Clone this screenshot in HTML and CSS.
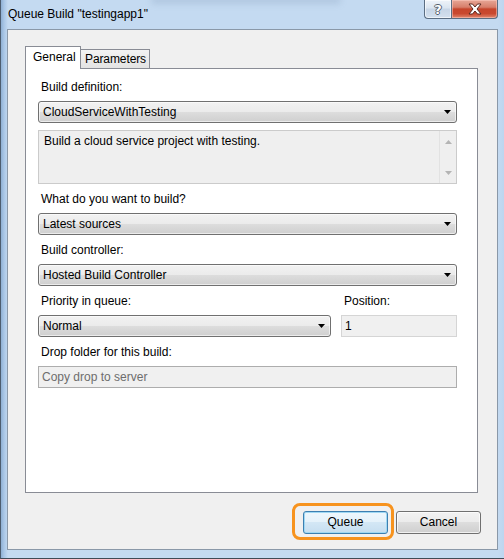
FILE: index.html
```html
<!DOCTYPE html>
<html>
<head>
<meta charset="utf-8">
<link rel="stylesheet" href="styles.css">
</head>
<body>
<div class="window">
  <div class="glass-blur"></div>
  <div class="titlebar">
    <span class="title">Queue Build "testingapp1"</span>
    <div class="caption-buttons">
      <div class="cap-btn help"><span class="q">?</span></div>
      <div class="cap-btn close">
        <svg width="16" height="12" viewBox="0 0 16 12"><path d="M2 1h3.5L8 4l2.5-3H14l-4 5 4 5h-3.5L8 8l-2.5 3H2l4-5z" fill="#fff" stroke="#5a2a22" stroke-width="1" stroke-linejoin="round"/></svg>
      </div>
    </div>
  </div>
  <div class="client">
    <div class="tabstrip">
      <div class="tab active">General</div>
      <div class="tab">Parameters</div>
    </div>
    <div class="panel">
      <div class="field">
        <div class="label">Build definition:</div>
        <div class="combo"><span>CloudServiceWithTesting</span><svg class="arrow" width="7" height="4" viewBox="0 0 7 4"><path d="M0 0h7L3.5 4z" fill="#000"/></svg></div>
      </div>
      <div class="desc">
        <div class="desc-text">Build a cloud service project with testing.</div>
        <div class="vscroll">
          <svg width="7" height="4" viewBox="0 0 7 4"><path d="M0 4h7L3.5 0z" fill="#b4b4b4"/></svg>
          <svg width="7" height="4" viewBox="0 0 7 4"><path d="M0 0h7L3.5 4z" fill="#b4b4b4"/></svg>
        </div>
      </div>
      <div class="field">
        <div class="label">What do you want to build?</div>
        <div class="combo"><span>Latest sources</span><svg class="arrow" width="7" height="4" viewBox="0 0 7 4"><path d="M0 0h7L3.5 4z" fill="#000"/></svg></div>
      </div>
      <div class="field">
        <div class="label">Build controller:</div>
        <div class="combo"><span>Hosted Build Controller</span><svg class="arrow" width="7" height="4" viewBox="0 0 7 4"><path d="M0 0h7L3.5 4z" fill="#000"/></svg></div>
      </div>
      <div class="row">
        <div class="field priority">
          <div class="label">Priority in queue:</div>
          <div class="combo"><span>Normal</span><svg class="arrow" width="7" height="4" viewBox="0 0 7 4"><path d="M0 0h7L3.5 4z" fill="#000"/></svg></div>
        </div>
        <div class="field position">
          <div class="label">Position:</div>
          <div class="textbox readonly">1</div>
        </div>
      </div>
      <div class="field">
        <div class="label">Drop folder for this build:</div>
        <div class="textbox disabled">Copy drop to server</div>
      </div>
    </div>
    <div class="buttons">
      <div class="focus-wrap">
        <div class="btn default">Queue</div>
        <div class="focus-ring"></div>
      </div>
      <div class="btn">Cancel</div>
    </div>
  </div>
</div>
</body>
</html>
```
FILE: styles.css
```css
* { box-sizing: border-box; }
html, body { margin: 0; padding: 0; }
body {
  width: 504px;
  height: 559px;
  overflow: hidden;
  font-family: "Liberation Sans", Arial, sans-serif;
  font-size: 12px;
  color: #000;
}
.window {
  position: relative;
  width: 504px;
  height: 559px;
  display: flex;
  flex-direction: column;
  background:
    linear-gradient(to right, #8fb0d4 0px, #a9c6e6 3px, #c4daf1 7px, #c4daf1 497px, #bcd5ef 504px);
  border-left: 1px solid #4d5d70;
  border-bottom: 1px solid #3f4a57;
}
.glass-blur {
  position: absolute;
  left: 150px;
  top: -4px;
  width: 190px;
  height: 8px;
  background: rgba(90, 115, 150, 0.18);
  filter: blur(3px);
  border-radius: 4px;
}
.titlebar {
  height: 29px;
  display: flex;
  justify-content: space-between;
  align-items: flex-start;
  padding-left: 7px;
  padding-right: 6px;
  position: relative;
}
.title {
  font-family: "Liberation Sans", Arial, sans-serif;
  font-size: 12px;
  line-height: 16px;
  margin-top: 6px;
  color: #000;
}
.caption-buttons {
  display: flex;
  height: 19px;
}
.cap-btn {
  height: 19px;
  display: flex;
  align-items: center;
  justify-content: center;
  border: 1px solid #5b6d82;
  border-top: none;
}
.help {
  width: 27px;
  border-right: none;
  border-radius: 0 0 0 4px;
  background: linear-gradient(#eef3f9 0%, #dbe5f0 45%, #c7d5e6 50%, #d3e0ee 100%);
  box-shadow: inset 0 0 0 1px rgba(255,255,255,0.6);
}
.help .q {
  font-family: "DejaVu Sans", sans-serif;
  font-weight: bold;
  font-size: 13px;
  line-height: 13px;
  color: #fff;
  text-shadow: -1px 0 #555f6c, 1px 0 #555f6c, 0 -1px #555f6c, 0 1px #555f6c;
}
.close {
  width: 47px;
  border-radius: 0 0 4px 0;
  background: linear-gradient(#e7a797 0%, #d77f6b 40%, #c6452c 50%, #c9482f 75%, #e0866d 100%);
  box-shadow: inset 0 0 0 1px rgba(255,210,200,0.5);
}
.close svg { display: block; }
.client {
  margin: 0 6px 8px 6px;
  flex: 1;
  background: #f0f0f0;
  border: 1px solid #8a98a8;
  padding: 16px 0 0 17px;
  display: flex;
  flex-direction: column;
}
.tabstrip {
  display: flex;
  align-items: flex-end;
  height: 22px;
}
.tab {
  border: 1px solid #898c95;
  border-bottom: none;
  padding: 0 5px;
  height: 19px;
  line-height: 18px;
  background: linear-gradient(#f3f3f3, #e3e3e3);
  white-space: nowrap;
}
.tab.active {
  position: relative;
  z-index: 1;
  height: 23px;
  margin-bottom: -1px;
  background: #fff;
  width: 56px;
  padding: 0 7px;
  line-height: 20px;
}
.tab + .tab {
  margin-left: -1px;
  padding: 0 3px 0 4px;
  line-height: 19px;
  letter-spacing: -0.1px;
}
.panel {
  width: 453px;
  height: 425px;
  background: #fff;
  border: 1px solid #898c95;
  padding: 10px 20px 0 12px;
  display: flex;
  flex-direction: column;
  gap: 7px;
}
.field {
  display: flex;
  flex-direction: column;
}
.label {
  height: 16px;
  line-height: 16px;
  padding-left: 3px;
  margin-bottom: 6px;
}
.combo {
  height: 22px;
  border: 1px solid #707070;
  border-radius: 3px;
  background: linear-gradient(#f2f2f2 0%, #ebebeb 50%, #dddddd 50%, #cfcfcf 100%);
  box-shadow: inset 0 0 0 1px rgba(255,255,255,0.6);
  display: flex;
  align-items: center;
  justify-content: space-between;
  padding: 0 5px 0 4px;
  line-height: 16px;
}
.arrow { display: block; }
.desc {
  height: 54px;
  border: 1px solid #cbcbcb;
  background: #efefef;
  display: flex;
  justify-content: space-between;
}
.desc-text {
  padding: 2px 5px;
  line-height: 16px;
}
.vscroll {
  width: 17px;
  border-left: 1px solid #e2e2e2;
  display: flex;
  flex-direction: column;
  justify-content: space-between;
  align-items: center;
  padding: 9px 0 8px;
}
.vscroll svg { display: block; }
.row {
  display: flex;
  gap: 10px;
}
.priority { width: 293px; }
.position { width: 116px; }
.textbox {
  height: 22px;
  border: 1px solid #d5d5d5;
  background: #f0f0f0;
  padding: 0 3px;
  line-height: 20px;
}
.textbox.disabled {
  border-color: #adadad;
  color: #6d6d6d;
}
.buttons {
  display: flex;
  justify-content: flex-end;
  gap: 8px;
  margin-top: 18px;
  padding-right: 16px;
}
.focus-wrap {
  position: relative;
}
.btn {
  width: 85px;
  height: 23px;
  border: 1px solid #707070;
  border-radius: 3px;
  background: linear-gradient(#f2f2f2 0%, #ebebeb 50%, #dddddd 50%, #cfcfcf 100%);
  box-shadow: inset 0 0 0 1px rgba(255,255,255,0.7);
  text-align: center;
  line-height: 21px;
}
.btn.default {
  border-color: #3c7fb1;
  background: linear-gradient(#eef7fc 0%, #e4f1fa 50%, #d3e7f5 50%, #c6def0 100%);
  box-shadow: inset 0 0 0 1px #9fd8f3;
}
.focus-ring {
  position: absolute;
  left: -11px;
  top: -8px;
  width: 102px;
  height: 37px;
  border: 3px solid #f7931e;
  border-radius: 8px;
}
```
